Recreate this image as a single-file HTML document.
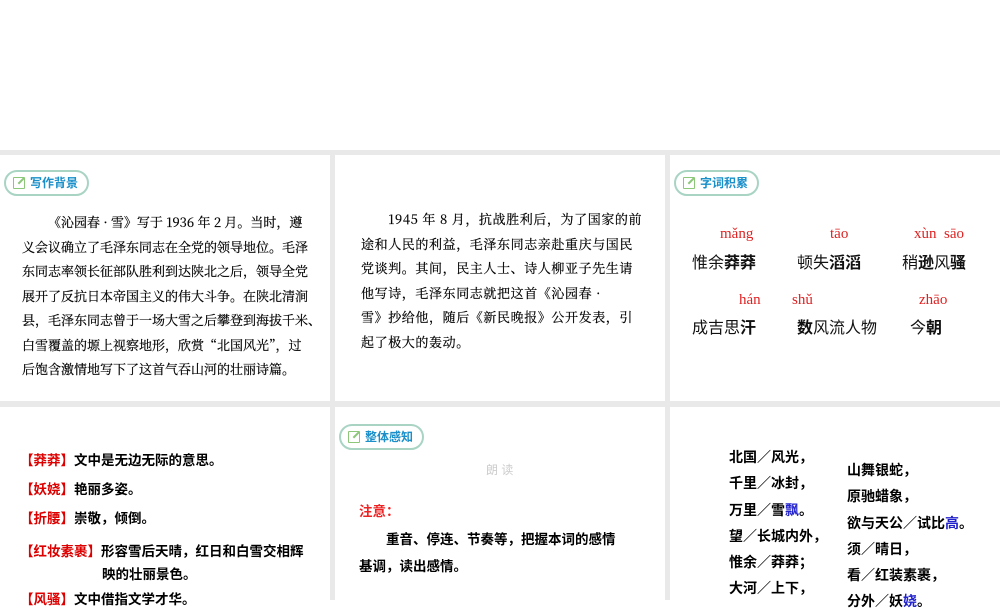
<!DOCTYPE html><html><head><meta charset="utf-8"><style>
body{margin:0;width:1000px;height:600px;overflow:hidden;background:#fff;position:relative;font-family:"Liberation Serif","Noto Serif CJK SC",serif;}
.g{position:absolute;background:#e9e9e9}
.tag{position:absolute;height:22px;border:2px solid #a9d4c4;border-radius:13px;color:#1a8fc9;font:bold 12px "Liberation Sans","Noto Sans CJK SC",sans-serif;line-height:22px;padding:0 9px 0 24px;box-sizing:content-box}
.tag:before{content:"";position:absolute;left:7px;top:5px;width:10px;height:10px;border:1.5px solid #8cc77a;border-radius:1px}
.tag:after{content:"";position:absolute;left:11px;top:8px;width:8px;height:1.5px;background:#8cc77a;transform:rotate(-45deg)}
.t{position:absolute;font-size:13px;line-height:24.5px;color:#000;white-space:nowrap}
.sf{font-family:"Noto Serif CJK SC","Liberation Serif",serif;-webkit-text-stroke:0.2px #000}
.s{font-family:"Liberation Sans","Noto Sans CJK SC",sans-serif}
.r{color:#d00}
.py{position:absolute;color:#d22;font:15px "Liberation Serif",serif}
.w{position:absolute;font:16px "Liberation Sans","Noto Sans CJK SC",sans-serif;color:#111}
b{font-weight:bold}
.bl{color:#22c}
</style></head><body>
<div class="g" style="left:0;top:150px;width:1000px;height:5px"></div>
<div class="g" style="left:330px;top:150px;width:5px;height:450px"></div>
<div class="g" style="left:665px;top:150px;width:5px;height:450px"></div>
<div class="g" style="left:0;top:401px;width:1000px;height:6px"></div>

<div class="tag" style="left:4px;top:170px">写作背景</div>
<div class="t sf" style="left:22px;top:210px">&emsp;&emsp;《沁园春 · 雪》写于 1936 年 2 月。当时，遵<br>义会议确立了毛泽东同志在全党的领导地位。毛泽<br>东同志率领长征部队胜利到达陕北之后，领导全党<br>展开了反抗日本帝国主义的伟大斗争。在陕北清涧<br>县，毛泽东同志曾于一场大雪之后攀登到海拔千米、<br>白雪覆盖的塬上视察地形，欣赏“北国风光”，过<br>后饱含激情地写下了这首气吞山河的壮丽诗篇。</div>

<div class="t sf" style="left:361px;top:207px;letter-spacing:0.6px">&emsp;&emsp;1945 年 8 月，抗战胜利后，为了国家的前<br>途和人民的利益，毛泽东同志亲赴重庆与国民<br>党谈判。其间，民主人士、诗人柳亚子先生请<br>他写诗，毛泽东同志就把这首《沁园春 ·<br>雪》抄给他，随后《新民晚报》公开发表，引<br>起了极大的轰动。</div>

<div class="tag" style="left:674px;top:170px">字词积累</div>
<div class="py" style="left:720px;top:226px">mǎng</div>
<div class="py" style="left:830px;top:226px">tāo</div>
<div class="py" style="left:914px;top:226px">xùn&nbsp; sāo</div>
<div class="w" style="left:692px;top:249px">惟余<b>莽莽</b></div>
<div class="w" style="left:797px;top:249px">顿失<b>滔滔</b></div>
<div class="w" style="left:902px;top:249px">稍<b>逊</b>风<b>骚</b></div>
<div class="py" style="left:739px;top:292px">hán</div>
<div class="py" style="left:792px;top:292px">shǔ</div>
<div class="py" style="left:919px;top:292px">zhāo</div>
<div class="w" style="left:692px;top:314px">成吉思<b>汗</b></div>
<div class="w" style="left:797px;top:314px"><b>数</b>风流人物</div>
<div class="w" style="left:910px;top:314px">今<b>朝</b></div>

<div class="t s" style="left:20px;top:446px;font-size:13.5px;font-weight:bold;line-height:29px">
<span class="r">【莽莽】</span>文中是无边无际的意思。<br>
<span class="r">【妖娆】</span>艳丽多姿。<br>
<span class="r">【折腰】</span>崇敬，倾倒。</div>
<div class="t s" style="left:20px;top:540px;font-size:13.5px;font-weight:bold;line-height:23px"><span class="r">【红妆素裹】</span>形容雪后天晴，红日和白雪交相辉<br><span style="padding-left:82px">映的壮丽景色。</span></div>
<div class="t s" style="left:20px;top:588px;font-size:13.5px;font-weight:bold"><span class="r">【风骚】</span>文中借指文学才华。</div>

<div class="tag" style="left:339px;top:424px">整体感知</div>
<div class="t s" style="left:486px;top:458px;color:#ccc;font-size:12px">朗 读</div>
<div class="t s" style="left:359px;top:500px;font-weight:bold;color:#e22;font-size:13.5px">注意：</div>
<div class="t s" style="left:359px;top:526px;font-weight:bold;line-height:27px;font-size:13.5px">&emsp;&emsp;重音、停连、节奏等，把握本词的感情<br>基调，读出感情。</div>

<div class="t s" style="left:729px;top:444px;font-weight:bold;line-height:26.3px;font-size:14px">北国／风光，<br>千里／冰封，<br>万里／雪<span class="bl">飘</span>。<br>望／长城内外，<br>惟余／莽莽；<br>大河／上下，</div>
<div class="t s" style="left:847px;top:457px;font-weight:bold;line-height:26.3px;font-size:14px">山舞银蛇，<br>原驰蜡象，<br>欲与天公／试比<span class="bl">高</span>。<br>须／晴日，<br>看／红装素裹，<br>分外／妖<span class="bl">娆</span>。</div>
</body></html>
